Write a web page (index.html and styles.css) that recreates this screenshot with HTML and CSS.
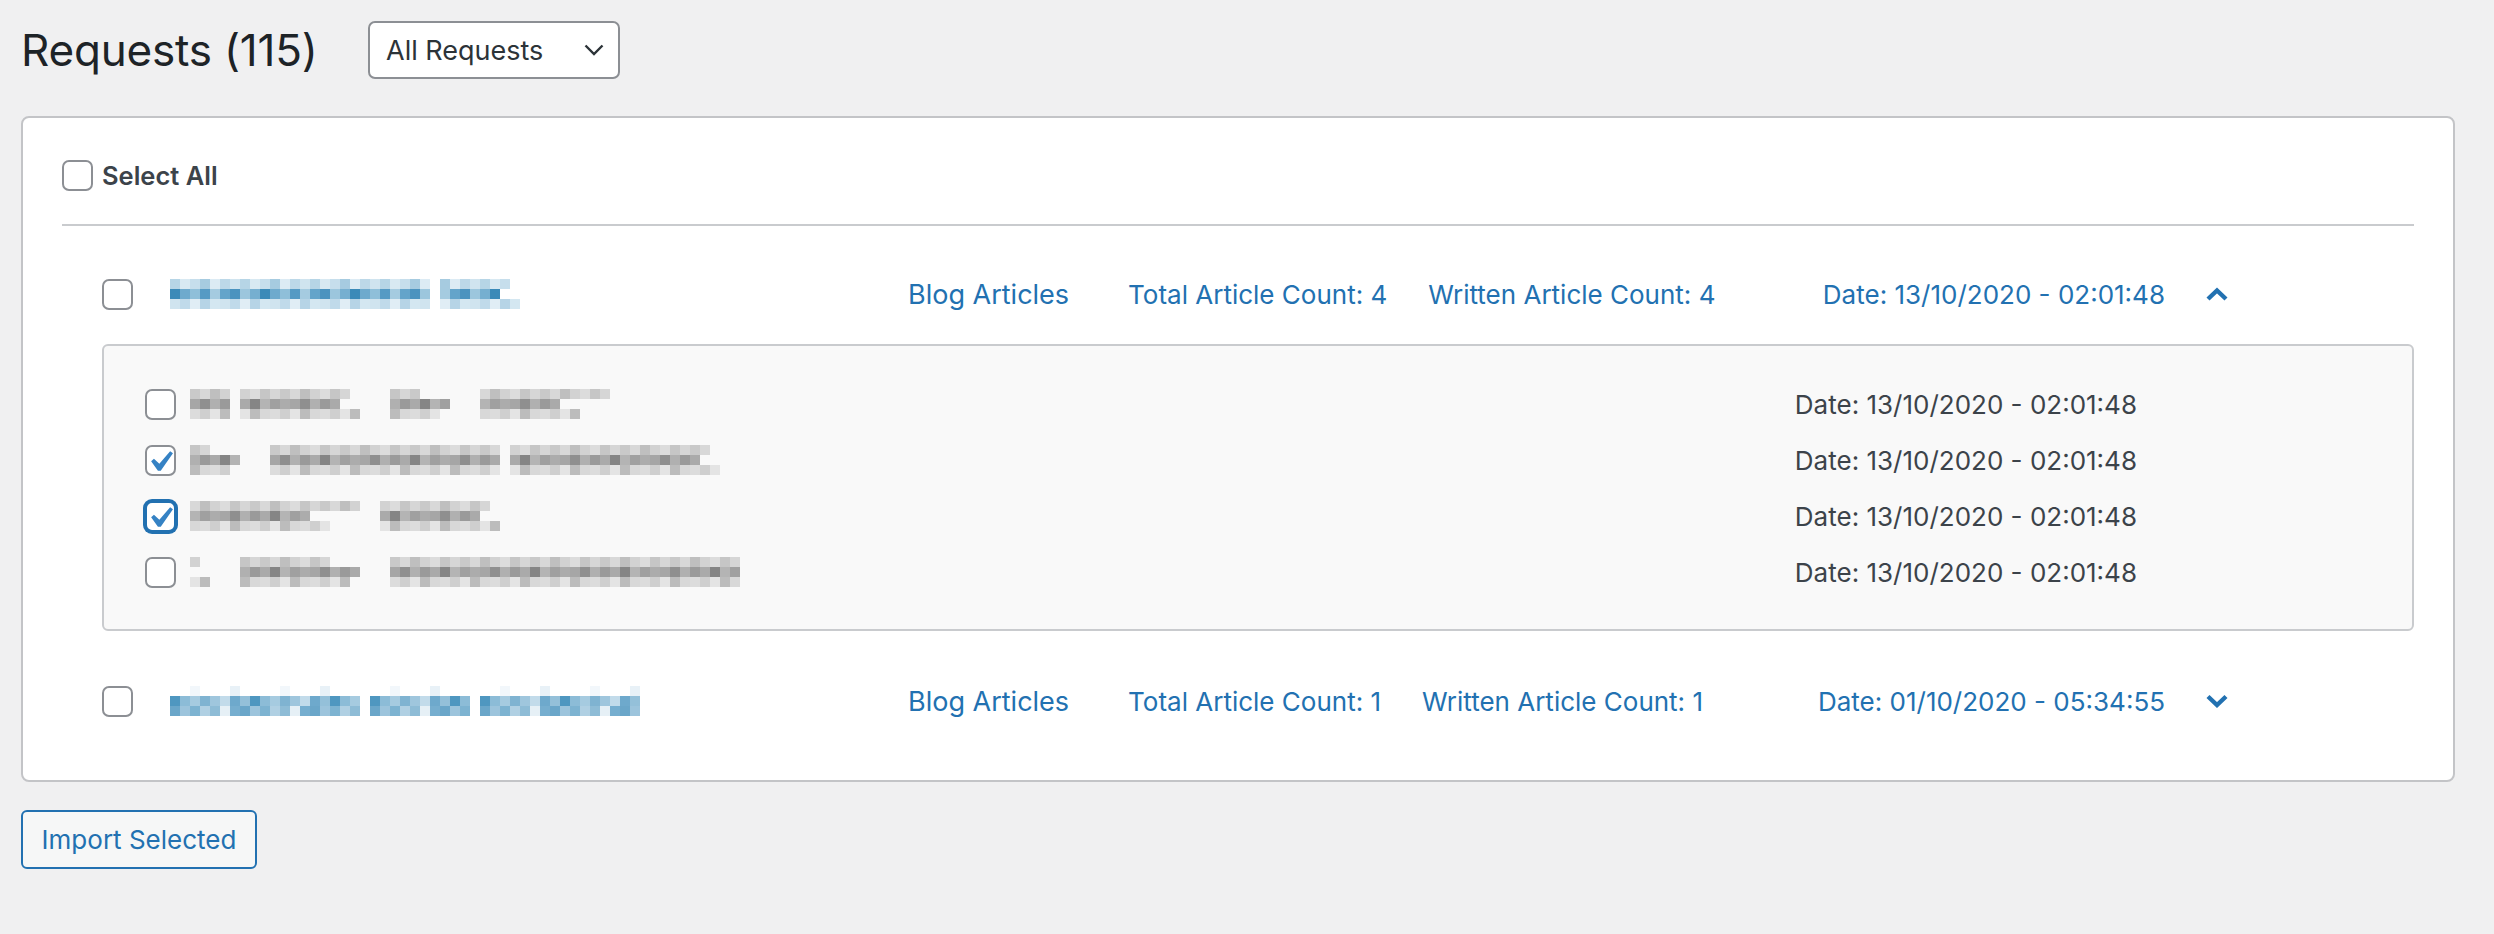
FILE: index.html
```html
<!DOCTYPE html>
<html lang="en">
<head>
<meta charset="utf-8">
<title>Requests</title>
<link rel="stylesheet" href="styles.css">
</head>
<body>
<div class="wrap">
  <div class="header">
    <h1 class="title">Requests (115)</h1>
    <div class="select">
      <span>All Requests</span>
      <svg class="select-caret" viewBox="0 0 20 12"><path d="M1.5 1.5 L10 10 L18.5 1.5"/></svg>
    </div>
  </div>

  <div class="card">
    <div class="select-all">
      <span class="cb"></span>
      <span class="select-all-label">Select All</span>
    </div>
    <div class="divider"></div>

    <div class="req">
      <span class="cb"></span>
      <div class="req-title">
        <span class="mz mz-blue w260"></span><span class="mz mz-blue w100 o2"></span>
      </div>
      <span class="meta meta-type">Blog Articles</span>
      <span class="meta meta-total">Total Article Count: 4</span>
      <span class="meta meta-written">Written Article Count: 4</span>
      <span class="meta meta-date">Date: 13/10/2020 - 02:01:48</span>
      <svg class="toggle" viewBox="0 0 22 14"><path d="M2 12 L11 3.5 L20 12"/></svg>
    </div>

    <div class="panel">
      <div class="item">
        <span class="cb"></span>
        <div class="item-title">
          <span class="mz mz-grey w40"></span><span class="mz mz-grey w140 o2"></span><span class="mz mz-grey w80 o3"></span><span class="mz mz-grey w140 o4"></span>
        </div>
        <span class="item-date">Date: 13/10/2020 - 02:01:48</span>
      </div>
      <div class="item">
        <span class="cb cb-checked"><svg viewBox="3.81 2.86 12.86 12.86"><path d="M14.83 4.89l1.34.94-5.81 8.38H9.02L5.78 9.67l1.34-1.25 2.57 2.4z"/></svg></span>
        <div class="item-title">
          <span class="mz mz-grey w70 o3"></span><span class="mz mz-grey w230"></span><span class="mz mz-grey w230 o2"></span>
        </div>
        <span class="item-date">Date: 13/10/2020 - 02:01:48</span>
      </div>
      <div class="item">
        <span class="cb cb-checked cb-focus"><svg viewBox="3.81 2.86 12.86 12.86"><path d="M14.83 4.89l1.34.94-5.81 8.38H9.02L5.78 9.67l1.34-1.25 2.57 2.4z"/></svg></span>
        <div class="item-title">
          <span class="mz mz-grey w180 o4"></span><span class="mz mz-grey w140 o2"></span>
        </div>
        <span class="item-date">Date: 13/10/2020 - 02:01:48</span>
      </div>
      <div class="item">
        <span class="cb"></span>
        <div class="item-title">
          <span class="mz mz-grey w40 o2"></span><span class="mz mz-grey w140 o3"></span><span class="mz mz-grey w350"></span>
        </div>
        <span class="item-date">Date: 13/10/2020 - 02:01:48</span>
      </div>
    </div>

    <div class="req req-last">
      <span class="cb"></span>
      <div class="req-title">
        <span class="mz mz-blue mz-low w190 o3"></span><span class="mz mz-blue mz-low w100"></span><span class="mz mz-blue mz-low w160 o2"></span>
      </div>
      <span class="meta meta-type">Blog Articles</span>
      <span class="meta meta-total">Total Article Count: 1</span>
      <span class="meta meta-written">Written Article Count: 1</span>
      <span class="meta meta-date">Date: 01/10/2020 - 05:34:55</span>
      <svg class="toggle" viewBox="0 0 22 14"><path d="M2 2.5 L11 11 L20 2.5"/></svg>
    </div>
  </div>

  <button class="btn" type="button">Import Selected</button>
</div>
</body>
</html>
```

FILE: styles.css
```css
* { box-sizing: border-box; }

body {
  margin: 0;
  background: #f0f0f1;
  font-family: Inter, "Noto Sans", "Liberation Sans", sans-serif;
  color: #1d2327;
}

.wrap {
  padding: 21px 39px 40px 21px;
}

/* header */
.header {
  display: flex;
  align-items: center;
  height: 58px;
}

.title {
  margin: 0;
  width: 347px;
  font-size: 44px;
  font-weight: 400;
  line-height: 58px;
  color: #1d2327;
  letter-spacing: -0.2px;
}

.select {
  width: 252px;
  height: 58px;
  display: flex;
  align-items: center;
  justify-content: space-between;
  padding: 0 14px 0 16px;
  background: #fff;
  border: 2px solid #8c8f94;
  border-radius: 7px;
  font-size: 27px;
  color: #2c3338;
}

.select-caret {
  width: 20px;
  height: 12px;
  fill: none;
  stroke: #2c3338;
  stroke-width: 2.4;
}

/* card */
.card {
  margin-top: 37px;
  background: #fff;
  border: 2px solid #c3c4c7;
  border-radius: 8px;
  padding: 42px 39px 49px;
}

.select-all {
  display: flex;
  align-items: center;
  height: 31px;
  gap: 9px;
}

.select-all-label {
  font-size: 25.5px;
  font-weight: 600;
  color: #3c434a;
}

.divider {
  margin-top: 33px;
  height: 2px;
  background: #c9cbce;
}

/* checkbox */
.cb {
  flex: 0 0 31px;
  width: 31px;
  height: 31px;
  background: #fff;
  border: 2px solid #8c8f94;
  border-radius: 7px;
  display: block;
}

.cb svg {
  display: block;
  width: 100%;
  height: 100%;
  overflow: visible;
  fill: #3582c4;
}

.cb-focus {
  border-color: #2271b1;
  box-shadow: 0 0 0 2px #2271b1;
}

/* request row */
.req {
  display: flex;
  align-items: center;
  height: 60px;
  margin-top: 38px;
  padding: 0 186px 0 40px;
}

.req-last {
  margin-top: 40px;
}

.req-title {
  flex: 0 0 738px;
  display: flex;
  gap: 10px;
  margin-left: 37px;
}

.meta {
  font-size: 26px;
  color: #2271b1;
  white-space: nowrap;
}

.meta-type { font-size: 27px; }
.meta-total { margin-left: 59px; }
.meta-written { margin-left: 41px; }
.meta-date { margin-left: auto; }

.toggle {
  flex: 0 0 22px;
  width: 22px;
  height: 14px;
  margin-left: 41px;
  fill: none;
  stroke: #2271b1;
  stroke-width: 4.4;
}

/* expanded panel */
.panel {
  margin: 20px 0 0 40px;
  background: #f9f9f9;
  border: 2px solid #c9cbce;
  border-radius: 6px;
  padding: 30px 275px 29px 41px;
}

.item {
  display: flex;
  align-items: center;
  height: 56px;
}

.item-title {
  display: flex;
  gap: 10px;
  margin-left: 14px;
}

.item-date {
  margin-left: auto;
  font-size: 26px;
  color: #3c434a;
  white-space: nowrap;
}

/* pixelated (redacted) titles */
.mz {
  display: block;
  height: 30px;
  flex: 0 0 auto;
}

.mz-blue {
  background:
    repeating-linear-gradient(90deg, #b6d5e6 0 10px, #d8e9f2 10px 20px, #c6deec 20px 30px, #a6cbe0 30px 40px, #dcebf4 40px 50px, #bcd8e8 50px 60px, #d0e4ef 60px 70px) 0 0 / 100% 10px no-repeat,
    repeating-linear-gradient(90deg, #3b8ab8 0 10px, #6eaacd 10px 20px, #8fbfd9 20px 30px, #559ac4 30px 40px, #a5cbe0 40px 50px, #64a4ca 50px 60px, #4b93bf 60px 70px, #9cc6dd 70px 80px, #76afd0 80px 90px) 0 10px / 100% 10px no-repeat,
    repeating-linear-gradient(90deg, #d0e4ef 0 10px, #c0daea 10px 20px, #e0edf5 20px 30px, #b6d4e6 30px 40px, #d4e7f1 40px 50px) 0 20px / 100% 10px no-repeat;
}

.mz-blue.mz-low {
  background:
    repeating-linear-gradient(90deg, #ffffff 0 20px, #f2f7fb 20px 30px, #ffffff 30px 60px, #e8f1f7 60px 70px, #ffffff 70px 90px) 0 0 / 100% 10px no-repeat,
    repeating-linear-gradient(90deg, #4f97c0 0 10px, #8cbcd7 10px 20px, #a6cbe0 20px 30px, #7fb3d1 30px 40px, #9fc6dd 40px 50px, #c2dbea 50px 60px, #6ea9cc 60px 70px, #94c0d9 70px 80px) 0 10px / 100% 10px no-repeat,
    repeating-linear-gradient(90deg, #6aa6c9 0 10px, #9cc4dc 10px 20px, #7db3d1 20px 30px, #b0d0e3 30px 40px, #8ebcd6 40px 50px, #e6f0f6 50px 60px, #76aecf 60px 70px) 0 20px / 100% 10px no-repeat;
}

.mz-grey {
  background:
    repeating-linear-gradient(90deg, #c9c9c9 0 10px, #d8d8d8 10px 20px, #bfbfbf 20px 30px, #d2d2d2 30px 40px, #dcdcdc 40px 50px, #c6c6c6 50px 60px, #d6d6d6 60px 70px) 0 0 / 100% 10px no-repeat,
    repeating-linear-gradient(90deg, #a6a6a6 0 10px, #8f8f8f 10px 20px, #b0b0b0 20px 30px, #9a9a9a 30px 40px, #aaaaaa 40px 50px, #858585 50px 60px, #b4b4b4 60px 70px, #a0a0a0 70px 80px, #acacac 80px 90px) 0 10px / 100% 10px no-repeat,
    repeating-linear-gradient(90deg, #dcdcdc 0 10px, #cfcfcf 10px 20px, #e4e4e4 20px 30px, #bcbcbc 30px 40px, #d8d8d8 40px 50px) 0 20px / 100% 10px no-repeat;
}

.o2 { background-position: -30px 0, -40px 10px, -20px 20px; }
.o3 { background-position: -50px 0, -20px 10px, -30px 20px; }
.o4 { background-position: -10px 0, -60px 10px, -40px 20px; }

.w40 { width: 40px; }
.w70 { width: 70px; }
.w80 { width: 80px; }
.w100 { width: 100px; }
.w140 { width: 140px; }
.w160 { width: 160px; }
.w180 { width: 180px; }
.w190 { width: 190px; }
.w230 { width: 230px; }
.w260 { width: 260px; }
.w350 { width: 350px; }

/* button */
.btn {
  display: block;
  margin-top: 28px;
  width: 236px;
  height: 59px;
  padding: 0;
  background: #f6f7f7;
  border: 2px solid #2271b1;
  border-radius: 6px;
  font-family: inherit;
  font-size: 26px;
  color: #2271b1;
}
```
